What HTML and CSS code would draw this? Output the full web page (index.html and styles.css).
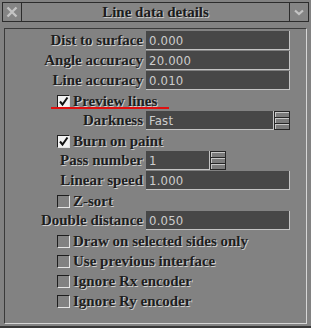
FILE: index.html
```html
<!DOCTYPE html>
<html lang="en">
<head>
  <meta charset="UTF-8" />
  <title>Line data details</title>
  <link rel="stylesheet" href="styles.css">
</head>
<body>

  <div class="window">
    <div class="titlebar">
      <div class="tb-btn">
        <svg width="18" height="18" viewBox="0 0 18 18">
          <path d="M4.5 4.5 L13.5 13.5 M13.5 4.5 L4.5 13.5" stroke="#c4c4c4" stroke-width="2.4" fill="none" />
        </svg>
      </div>
      <div class="tb-title">Line data details</div>
      <div class="tb-btn">
        <svg width="18" height="18" viewBox="0 0 18 18">
          <path d="M5 7.5 L9 11 L13 7.5" stroke="#c4c4c4" stroke-width="2.2" fill="none" />
        </svg>
      </div>
    </div>

    <div class="panel">
      <div class="form">
        <div class="lbl">Dist to surface</div>
        <div class="field">0.000</div>

        <div class="lbl">Angle accuracy</div>
        <div class="field">20.000</div>

        <div class="lbl">Line accuracy</div>
        <div class="field">0.010</div>

        <div class="check-row marked">
          <span class="box on"><svg width="11" height="11" viewBox="0 0 11 11"><path d="M2 5.5 L4.5 8.5 L9.5 1.5" stroke="#111" stroke-width="2" fill="none" /></svg></span>
          Preview lines
        </div>

        <div class="lbl">Darkness</div>
        <div class="combo">
          <div class="field">Fast</div>
          <div class="spin"><span></span><span></span><span></span></div>
        </div>

        <div class="check-row">
          <span class="box on"><svg width="11" height="11" viewBox="0 0 11 11"><path d="M2 5.5 L4.5 8.5 L9.5 1.5" stroke="#111" stroke-width="2" fill="none" /></svg></span>
          Burn on paint
        </div>

        <div class="lbl">Pass number</div>
        <div class="combo short">
          <div class="field">1</div>
          <div class="spin"><span></span><span></span><span></span></div>
        </div>

        <div class="lbl">Linear speed</div>
        <div class="field">1.000</div>

        <div class="check-row"><span class="box"></span>Z-sort</div>

        <div class="lbl">Double distance</div>
        <div class="field">0.050</div>

        <div class="check-row"><span class="box"></span>Draw on selected sides only</div>
        <div class="check-row"><span class="box"></span>Use previous interface</div>
        <div class="check-row"><span class="box"></span>Ignore Rx encoder</div>
        <div class="check-row"><span class="box"></span>Ignore Ry encoder</div>
      </div>
    </div>
  </div>

</body>
</html>
```

FILE: styles.css
```css
body {
  margin: 0;
  background-color: #808080;
  font-family: "Liberation Serif", serif;
}
.window {
  width: 311px;
  height: 328px;
  box-sizing: border-box;
  padding: 2px 2px 0 2px;
  background-color: #828282;
  border-bottom: 2px solid #383838;
  display: flex;
  flex-direction: column;
}
.titlebar {
  height: 20px;
  box-sizing: border-box;
  border: 1px solid #2c2c2c;
  display: flex;
  background-color: #858585;
}
.tb-btn {
  width: 18px;
  flex-shrink: 0;
  display: flex;
  align-items: center;
  justify-content: center;
}
.tb-btn:first-child { border-right: 1px solid #2c2c2c; }
.tb-btn:last-child { border-left: 1px solid #2c2c2c; }
.tb-title {
  flex: 1;
  text-align: center;
  font-weight: bold;
  font-size: 15px;
  line-height: 18px;
  color: #1c1c1c;
  text-shadow: 1px 1px 0 #c8c8c8;
}
.panel {
  flex: 1;
  margin: 6px 2px 2px 2px;
  border-top: 1px solid #3a3a3a;
  border-left: 1px solid #3a3a3a;
  border-right: 1px solid #d6d6d6;
  border-bottom: 1px solid #d6d6d6;
  padding-top: 2px;
}
.form {
  display: grid;
  grid-template-columns: 138px 144px;
  grid-auto-rows: 20px;
  column-gap: 3px;
}
.lbl {
  text-align: right;
  font-weight: bold;
  font-size: 15px;
  line-height: 19px;
  color: #1e1e1e;
  text-shadow: 1px 1px 0 #cfcfcf;
  white-space: nowrap;
}
.field {
  height: 19px;
  box-sizing: border-box;
  background-color: #474747;
  border-right: 1px solid #c4c4c4;
  border-bottom: 1px solid #c4c4c4;
  padding-left: 3px;
  font-family: "DejaVu Sans Condensed", "DejaVu Sans", sans-serif;
  font-size: 13px;
  line-height: 19px;
  letter-spacing: 0.2px;
  color: #cdcdcd;
}
.combo { display: flex; height: 19px; }
.combo .field { width: 128px; }
.combo.short .field { width: 64px; }
.spin {
  width: 16px;
  display: flex;
  flex-direction: column;
}
.spin span {
  flex: 1;
  border: 1px solid #262626;
  background-color: #7c7c7c;
  box-shadow: inset 1px 1px 0 #c8c8c8;
}
.spin span + span { border-top: none; }
.check-row {
  grid-column: 1 / span 2;
  position: relative;
  display: flex;
  align-items: center;
  padding-left: 52px;
  font-weight: bold;
  font-size: 15px;
  color: #1e1e1e;
  text-shadow: 1px 1px 0 #cfcfcf;
  white-space: nowrap;
}
.box {
  width: 13px;
  height: 13px;
  flex-shrink: 0;
  box-sizing: border-box;
  margin-right: 3px;
  border-top: 1px solid #1e1e1e;
  border-left: 1px solid #1e1e1e;
  border-right: 1px solid #e4e4e4;
  border-bottom: 1px solid #e4e4e4;
  display: flex;
  align-items: center;
  justify-content: center;
}
.box.on { background-color: #f2f2f2; }
.marked::after {
  content: "";
  position: absolute;
  left: 46px;
  top: 16px;
  width: 118px;
  height: 2px;
  background-color: #e01010;
}
```
